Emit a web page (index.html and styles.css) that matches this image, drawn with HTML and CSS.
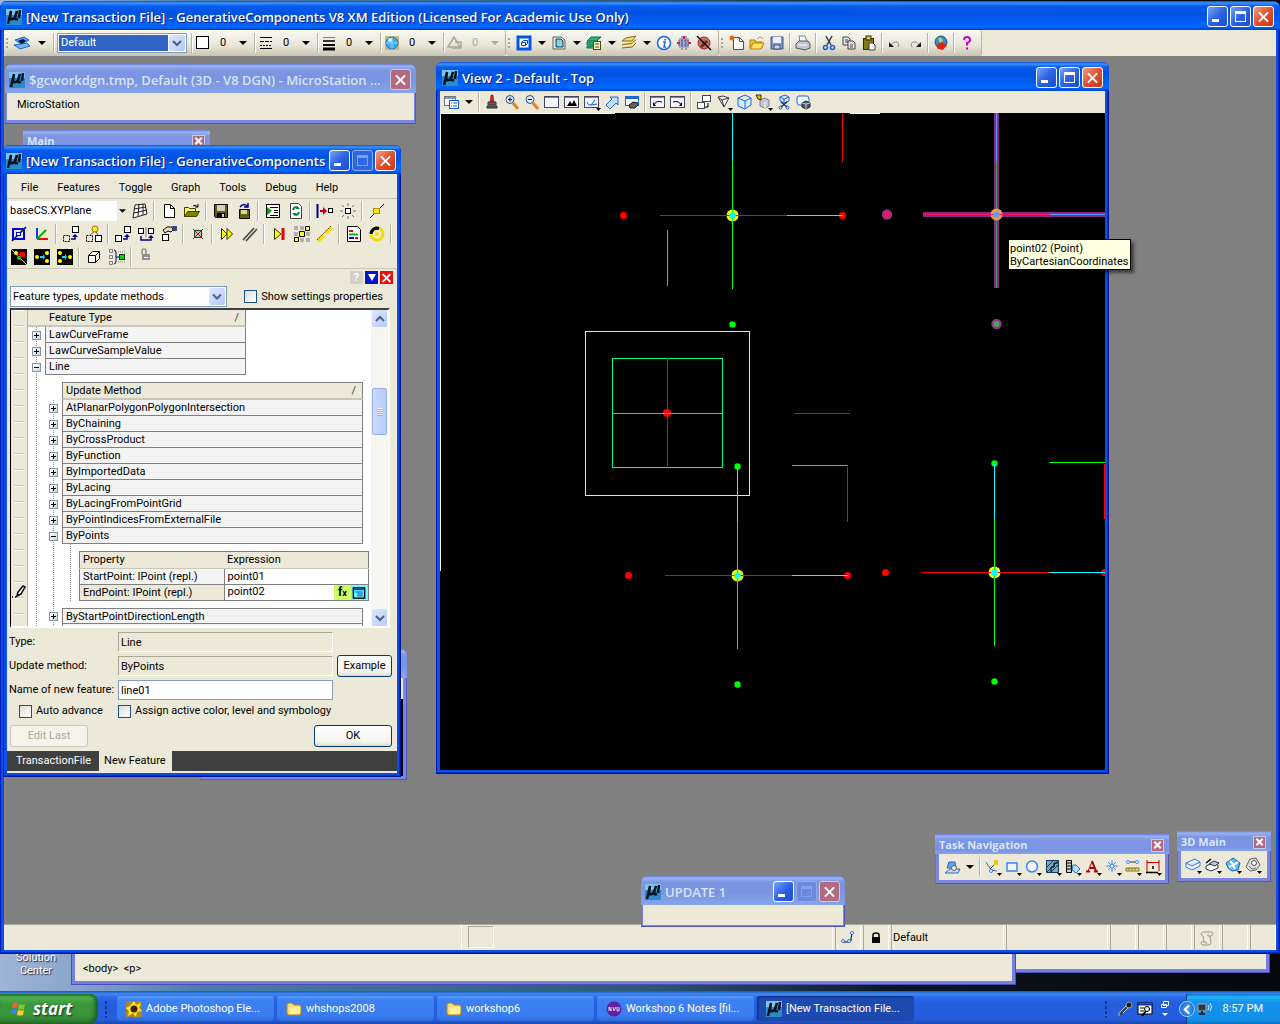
FILE: index.html
```html
<!DOCTYPE html>
<html lang="en">
<head>
  <meta charset="UTF-8">
  <meta name="viewport" content="width=device-width, initial-scale=1.0">
  <title>GenerativeComponents</title>
  <link rel="stylesheet" href="styles.css">
</head>
<body>

  <!-- icon sprite -->
  <svg class="sprite" xmlns="http://www.w3.org/2000/svg">
    <symbol id="mu" viewBox="0 0 16 16"><rect width="16" height="16" fill="#2c8cc8"/><rect width="16" height="6" fill="#7cc4ea"/><path d="M5 2 2 15M5 2 4 9q2 3 5-1l2-6-2 7q0 2 3 1M14 1l-1 8" fill="none" stroke="#001020" stroke-width="2.500"/></symbol>
    <symbol id="drop" viewBox="0 0 8 8"><path d="M0 2h8L4 6z" fill="#000"/></symbol>
    <symbol id="drop-off" viewBox="0 0 8 8"><path d="M0 2h8L4 6z" fill="#aaa899"/></symbol>
    <symbol id="chev" viewBox="0 0 10 8"><path d="M1 2l4 4 4-4" fill="none" stroke="#4d6185" stroke-width="2"/></symbol>
    <symbol id="chev-up" viewBox="0 0 10 8"><path d="M1 6l4-4 4 4" fill="none" stroke="#4d6185" stroke-width="2"/></symbol>

    <symbol id="layers-blue" viewBox="0 0 16 16"><path d="M0 10l6 4 10-3-3-3z" fill="#7ab6f5" stroke="#1c62c8"/><path d="M1 5l9-3 5 3-8 4z" fill="#58a0f0" stroke="#1c62c8"/><path d="M4 6l5-2 3 2-4 3z" fill="#001830"/></symbol>
    <symbol id="swatch" viewBox="0 0 16 16"><rect x="1.500" y="1.500" width="12" height="12" fill="#fff" stroke="#000"/></symbol>
    <symbol id="linestyle" viewBox="0 0 16 16"><path d="M2 2.500h12M2 13.500h12" stroke="#000"/><path d="M2 6.500h12" stroke="#000" stroke-dasharray="4 1"/><path d="M2 10.500h12" stroke="#000" stroke-dasharray="2 1"/></symbol>
    <symbol id="weight" viewBox="0 0 16 16"><path d="M2 2.500h12" stroke="#a08040"/><path d="M2 6h12" stroke="#333" stroke-width="2"/><path d="M2 10h12" stroke="#000" stroke-width="2"/><path d="M2 14h12" stroke="#000" stroke-width="3"/></symbol>
    <symbol id="ball" viewBox="0 0 16 16"><rect x="1" y="1" width="14" height="14" fill="#c8b878"/><circle cx="8" cy="8" r="6" fill="#38b0f0" stroke="#1868c0"/><path d="M8 2v12M2 8h12" stroke="#90d8ff"/><circle cx="6" cy="5" r="2" fill="#d8f6ff"/></symbol>
    <symbol id="shapes-off" viewBox="0 0 16 16"><path d="M7 2L1 12h12z" fill="none" stroke="#aaa899" stroke-width="1.500"/><path d="M8 7h6v6H5" fill="none" stroke="#aaa899" stroke-width="1.500"/></symbol>

    <symbol id="ref" viewBox="0 0 16 16"><rect x="2" y="2" width="12" height="12" fill="#fff" stroke="#0058e8" stroke-width="3"/><path d="M5.500 7.500h4v3h-4zM5.500 7.500l2-2h4v3l-2 2" fill="none" stroke="#0040b0"/></symbol>
    <symbol id="model" viewBox="0 0 16 16"><path d="M2 2h8l4 3v9H2z" fill="#e8eef0" stroke="#606060"/><path d="M5 4h5l2 2v6H5z" fill="#70d8e8" stroke="#303030"/></symbol>
    <symbol id="levels" viewBox="0 0 16 16"><path d="M1 6l4-4h10l-4 4zM1 7v3h10V7zM1 11v2h9v-2z" fill="#28b080" stroke="#107048"/><rect x="7.500" y="6.500" width="7" height="8" fill="#f8f0b8" stroke="#504820"/><path d="M9 9h4M9 12h4" stroke="#504820"/></symbol>
    <symbol id="levels-y" viewBox="0 0 16 16"><path d="M1 6l4-3 10-2-4 5zM1 9.500l10-1 4-4M1 13l10-1 4-4" fill="#f6e070" stroke="#806818"/></symbol>
    <symbol id="info" viewBox="0 0 16 16"><circle cx="8" cy="8" r="6.500" fill="#fff" stroke="#1868e0" stroke-width="1.500"/><path d="M9 4v1.500M7 7h2l-1 5h2" stroke="#1868e0" stroke-width="1.500" fill="none"/></symbol>
    <symbol id="snap" viewBox="0 0 16 16"><rect x="3" y="3" width="10" height="10" fill="#a8a8d8"/><path d="M6 1v14M10 1v14M2 6h12M2 10h12" stroke="#505080" stroke-dasharray="2 1"/><path d="M1 8h3M12 8h3M8 1v3" stroke="#e02020" stroke-width="2"/></symbol>
    <symbol id="nohammer" viewBox="0 0 16 16"><circle cx="8" cy="8" r="6" fill="#c87060" stroke="#a02020"/><path d="M4 11l6-6 2 2-6 6z" fill="#603020"/><path d="M1 1l14 14" stroke="#000" stroke-width="1.500"/></symbol>
    <symbol id="new" viewBox="0 0 16 16"><path d="M4.500 2.500h6l4 4v8h-10z" fill="#fff" stroke="#505050"/><path d="M10.500 2.500v4h4" fill="none" stroke="#505050"/><circle cx="3" cy="3" r="2.500" fill="#f06020"/></symbol>
    <symbol id="open" viewBox="0 0 16 16"><path d="M1 5h5l1 2h6v6H1z" fill="#f0c030" stroke="#b88010"/><path d="M1 14l3-6h11l-3 6z" fill="#ffe060" stroke="#b88010"/><path d="M8 4q3-4 6 0" stroke="#d89020" fill="none"/></symbol>
    <symbol id="save" viewBox="0 0 16 16"><path d="M2 2h12v12H2z" fill="#8098c8" stroke="#405080"/><rect x="4" y="2" width="8" height="6" fill="#f0f4ff"/><rect x="5" y="10" width="6" height="4" fill="#d0d8e8" stroke="#405080"/></symbol>
    <symbol id="print" viewBox="0 0 16 16"><path d="M5 7L4 1h6l2 6" fill="#fff" stroke="#7080a0"/><path d="M1 9l3-3h9l2 3v4l-5 2-9-2z" fill="#c0c4cc" stroke="#505868"/><path d="M3 10h9" stroke="#fff"/></symbol>
    <symbol id="cut" viewBox="0 0 16 16"><path d="M5 1l5 9M11 1L6 10" stroke="#303848" stroke-width="1.500"/><circle cx="4.500" cy="12.500" r="2" fill="none" stroke="#1858d8" stroke-width="1.500"/><circle cx="11.500" cy="12.500" r="2" fill="none" stroke="#1858d8" stroke-width="1.500"/></symbol>
    <symbol id="copy" viewBox="0 0 16 16"><path d="M2 2h5l2 2v6H2z" fill="#e8e8f0" stroke="#404040"/><path d="M7 6h5l2 2v6H7z" fill="#e8e8f0" stroke="#404040"/><path d="M4 5h3M4 7h3M9 10h3M9 12h3" stroke="#404040"/></symbol>
    <symbol id="paste" viewBox="0 0 16 16"><rect x="2.500" y="3.500" width="10" height="11" fill="#807818" stroke="#302c00"/><rect x="5" y="1" width="5" height="4" fill="#d0c060" stroke="#302c00"/><path d="M8 8h4l2 2v5H8z" fill="#fff" stroke="#404040"/></symbol>
    <symbol id="undo" viewBox="0 0 16 16"><path d="M4 10q2-4 6-3 3 1 1 5" fill="none" stroke="#909090"/><path d="M2 7v5h5z" fill="#202020"/></symbol>
    <symbol id="redo" viewBox="0 0 16 16"><path d="M12 10q-2-4-6-3-3 1-1 5" fill="none" stroke="#909090"/><path d="M14 7v5H9z" fill="#202020"/></symbol>
    <symbol id="earth" viewBox="0 0 16 16"><circle cx="8" cy="7" r="6" fill="#3090d0" stroke="#305080"/><path d="M5 3q4-1 5 3l-3 2z" fill="#a8d878"/><path d="M3 10l6-3 5 3-4 5-5-1z" fill="#e02010"/></symbol>
    <symbol id="help" viewBox="0 0 16 16"><path d="M5 5q0-3 3-3t3 3q0 2-3 3v2.500M8 12.500v2" fill="none" stroke="#d000c8" stroke-width="2"/></symbol>

    <symbol id="v-attr" viewBox="0 0 16 16"><rect x="1.500" y="2.500" width="11" height="9" fill="#fff" stroke="#707070"/><path d="M2 4h11" stroke="#7898c8" stroke-width="2"/><rect x="6.500" y="6.500" width="9" height="8" fill="#fff" stroke="#1858d8"/><path d="M8 9h1M8 12h1M10 9h4M10 12h4" stroke="#1858d8"/></symbol>
    <symbol id="brush" viewBox="0 0 16 16"><path d="M7 1h2l1 7H6z" fill="#c03028" stroke="#601010" stroke-width=".5"/><path d="M4 8h8v3H4z" fill="#a04040" stroke="#303840"/><path d="M3 12h10v2H3z" fill="#607080" stroke="#202830"/></symbol>
    <symbol id="zoomin" viewBox="0 0 16 16"><path d="M9 9l5 6" stroke="#e08820" stroke-width="3"/><circle cx="6" cy="5.500" r="4" fill="#d8ecff" stroke="#305080"/><path d="M4 5.500h4M6 3.500v4" stroke="#000"/></symbol>
    <symbol id="zoomout" viewBox="0 0 16 16"><path d="M9 9l5 6" stroke="#e08820" stroke-width="3"/><circle cx="6" cy="5.500" r="4" fill="#d8ecff" stroke="#305080"/><path d="M4 5.500h4" stroke="#000"/></symbol>
    <symbol id="win" viewBox="0 0 16 16"><rect x=".5" y="2.500" width="14" height="11" fill="#f4f4fc" stroke="#404860"/><path d="M1 3.500h13" stroke="#6888b8"/></symbol>
    <symbol id="win-fit" viewBox="0 0 16 16"><rect x=".5" y="2.500" width="14" height="11" fill="#f4f4fc" stroke="#404860"/><path d="M1 3.500h13" stroke="#6888b8"/><path d="M3 12l3-5 2 3 2-4 3 6z" fill="#000"/></symbol>
    <symbol id="win-rot" viewBox="0 0 16 16"><rect x=".5" y="2.500" width="14" height="11" fill="#f4f4fc" stroke="#404860"/><path d="M1 3.500h13" stroke="#6888b8"/><path d="M3 8q1 4 4 3l6-1M7 11l4-5" stroke="#1858d8" fill="none"/><path d="M12 14h5l-2.500 3z"/></symbol>
    <symbol id="pan" viewBox="0 0 16 16"><path d="M2 12l6-6-2-2h8v8l-2-2-6 6z" transform="translate(0 -1)" fill="#c8dcff" stroke="#1868d8"/></symbol>
    <symbol id="win-nav" viewBox="0 0 16 16"><rect x="1.500" y="2.500" width="13" height="9" fill="#f4f4fc" stroke="#1868d8"/><path d="M2 4h12" stroke="#1868d8" stroke-width="2"/><path d="M5 11l4-3 5 1v2l-3 3H6z" fill="#606060" stroke="#202020"/></symbol>
    <symbol id="win-prev" viewBox="0 0 16 16"><rect x=".5" y="2.500" width="14" height="11" fill="#f4f4fc" stroke="#404860"/><path d="M1 3.500h13" stroke="#6888b8"/><path d="M4 11q2-5 8-3" stroke="#000" fill="none"/><path d="M3 8v4h3z"/></symbol>
    <symbol id="win-next" viewBox="0 0 16 16"><rect x=".5" y="2.500" width="14" height="11" fill="#f4f4fc" stroke="#404860"/><path d="M1 3.500h13" stroke="#6888b8"/><path d="M11 11q-2-5-8-3" stroke="#000" fill="none"/><path d="M12 8v4H9z"/></symbol>
    <symbol id="v-copy" viewBox="0 0 16 16"><rect x="6.500" y="1.500" width="8" height="6" fill="#fff" stroke="#404860"/><rect x="1.500" y="8.500" width="7" height="6" fill="#fff" stroke="#404860"/><path d="M9 13h3v-4" stroke="#000" fill="none"/></symbol>
    <symbol id="cone" viewBox="0 0 16 16"><path d="M2 3l5-1 6 2-5 9zM2 3l4 3 7-2M6 6l2 7" fill="#f4f4fc" stroke="#404040"/><path d="M12 14h5l-2.500 3z"/></symbol>
    <symbol id="cube" viewBox="0 0 16 16"><path d="M2 4l7-3 6 3v7l-6 4-7-3zM2 4l7 3 6-3M9 7v8" fill="#d8e8ff" stroke="#1868e0"/></symbol>
    <symbol id="clip-y" viewBox="0 0 16 16"><path d="M4 6l5-2 4 2v6l-4 2-5-2z" fill="#c8c8d0" stroke="#808090"/><path d="M9 8v6" stroke="#fff"/><path d="M0 1h5v5l-3-1z" fill="#d8c800" stroke="#303000"/><path d="M12 14h5l-2.500 3z"/></symbol>
    <symbol id="clip-b" viewBox="0 0 16 16"><path d="M4 3l5-2 4 2v4L8 9 4 7zM4 3l4 2 5-2M8 5v4" fill="#d8e8ff" stroke="#1868e0"/><path d="M5 8l6 5M11 8l-6 5" stroke="#303848" stroke-width="1.500"/><circle cx="4.500" cy="13.500" r="1.500" fill="none" stroke="#1858d8"/><circle cx="11.500" cy="13.500" r="1.500" fill="none" stroke="#1858d8"/></symbol>
    <symbol id="clip-m" viewBox="0 0 16 16"><path d="M3 2h8q2 0 2 3v5H7v1H3q-2 0-2-3V4q0-2 2-2z" fill="#f4f8ff" stroke="#1868e0"/><path d="M6 9l4-2 4 2v4l-4 2-4-2z" fill="#505860" stroke="#202020"/><path d="M6 9l4 1 4-1M10 10v5" fill="none" stroke="#c0c8d0"/></symbol>

    <symbol id="mesh" viewBox="0 0 16 16"><path d="M3 2l10-1 2 10-14 4zM7 1L6 13M11 1l0 11M2 6l12-2M2 10l13-3" fill="#fff" stroke="#202020"/></symbol>
    <symbol id="page" viewBox="0 0 16 16"><path d="M3.500 1.500h6l4 4v9h-10z" fill="#fff" stroke="#000"/><path d="M9.500 1.500v4h4" fill="none" stroke="#000"/></symbol>
    <symbol id="folder" viewBox="0 0 16 16"><path d="M.5 13.500v-9h4l1 1h6v3" fill="#ffff60" stroke="#404000"/><path d="M.5 13.500l3-5h12l-3 5z" fill="#808000" stroke="#404000"/><path d="M9 3q2-2 5 1M14 1v3h-3" fill="none" stroke="#000"/></symbol>
    <symbol id="disk" viewBox="0 0 16 16"><path d="M1.500 1.500h13v13h-12l-1-1z" fill="#606000" stroke="#000"/><rect x="4" y="2" width="8" height="6" fill="#d4d0c8"/><rect x="4" y="10" width="8" height="4" fill="#000"/><rect x="9" y="11" width="2" height="3" fill="#d4d0c8"/></symbol>
    <symbol id="disk-up" viewBox="0 0 16 16"><path d="M3.500 6.500h10v9h-10z" fill="#606000" stroke="#000"/><rect x="5" y="7" width="6" height="4" fill="#d4d0c8"/><path d="M4 4q4-5 8 0M12 0v4H8" fill="none" stroke="#000090" stroke-width="1.500"/></symbol>
    <symbol id="play-list" viewBox="0 0 16 16"><rect x="1.500" y="1.500" width="13" height="13" fill="#fff" stroke="#000"/><path d="M2 4l5 4-5 4z" fill="#00a000"/><path d="M5 4.500h8M9 7.500h4M9 9.500h4M5 12.500h8" stroke="#000"/></symbol>
    <symbol id="refresh" viewBox="0 0 16 16"><path d="M2.500.5h8l3 3v12h-11z" fill="#fff" stroke="#404040"/><path d="M5 7q1-4 5-2M11 9q-1 4-5 2" fill="none" stroke="#008040" stroke-width="2"/><path d="M9 3l3 3H8zM7 13l-3-3h4z" fill="#008040"/></symbol>
    <symbol id="step" viewBox="0 0 16 16"><path d="M.5 1v14" stroke="#000080" stroke-width="2"/><path d="M3 8h5" stroke="#c00000" stroke-width="2"/><path d="M6 4l4 4-4 4z" fill="#c00000"/><rect x="11.500" y="5.500" width="4" height="4" fill="#fff" stroke="#000"/></symbol>
    <symbol id="glow" viewBox="0 0 16 16"><rect x="5.500" y="5.500" width="5" height="5" fill="#fff" stroke="#000"/><path d="M8 0v3M8 13v3M0 8h3M13 8h3M2 2l2 2M14 2l-2 2M2 14l2-2M14 14l-2-2" stroke="#707070"/></symbol>
    <symbol id="pt-line" viewBox="0 0 16 16"><path d="M1 15L15 1" stroke="#000"/><rect x="4.500" y="5.500" width="6" height="5" fill="#ffe000" stroke="#b09000"/></symbol>
    <symbol id="plane" viewBox="0 0 16 16"><path d="M1 15L15 1" stroke="#000" stroke-width="1.500"/><rect x="2" y="3" width="11" height="10" fill="none" stroke="#0000e0" stroke-width="2"/><rect x="5.500" y="6.500" width="4" height="3" fill="#fff" stroke="#0000e0"/></symbol>
    <symbol id="axes" viewBox="0 0 16 16"><path d="M3 2v11" stroke="#0040ff" stroke-width="2"/><path d="M3 13h11" stroke="#ff0000" stroke-width="2"/><path d="M3 13l9-9" stroke="#00b000" stroke-width="2"/></symbol>
    <symbol id="move-a" viewBox="0 0 16 16"><rect x="9.500" y=".5" width="6" height="6" fill="#fff" stroke="#000"/><rect x=".5" y="9.500" width="6" height="6" fill="none" stroke="#000" stroke-dasharray="2 1"/><path d="M8 13h4v-3" fill="none" stroke="#000080" stroke-width="1.500"/><path d="M9 11l3-3 3 3z" fill="#000080"/></symbol>
    <symbol id="move-b" viewBox="0 0 16 16"><circle cx="9" cy="3" r="3" fill="#ffe820" stroke="#908000"/><rect x=".5" y="9.500" width="6" height="6" fill="none" stroke="#000" stroke-dasharray="2 1"/><rect x="9.500" y="9.500" width="6" height="6" fill="#fff" stroke="#000"/><path d="M8 6l-4 3M10 6l2 3" stroke="#606060"/></symbol>
    <symbol id="move-c" viewBox="0 0 16 16"><rect x="9.500" y=".5" width="6" height="6" fill="#fff" stroke="#000"/><rect x=".5" y="9.500" width="6" height="6" fill="#fff" stroke="#000"/><path d="M8 13h4v-3" fill="none" stroke="#000080" stroke-width="1.500"/><path d="M9 11l3-3 3 3z" fill="#000080"/></symbol>
    <symbol id="move-d" viewBox="0 0 16 16"><rect x=".5" y="2.500" width="5" height="5" fill="#fff" stroke="#000"/><rect x="10.500" y="2.500" width="5" height="5" fill="#fff" stroke="#000"/><path d="M8 1v10" stroke="#808080"/><path d="M3 10v4h10v-3" fill="none" stroke="#000080" stroke-width="1.500"/><path d="M10 12l3-3 3 3z" fill="#000080"/></symbol>
    <symbol id="hand" viewBox="0 0 16 16"><rect x="1.500" y="8.500" width="6" height="6" fill="#fff" stroke="#000"/><path d="M2 4l4-3h5l1 3-2 2-3-1-3 2z" fill="#e8e0c0" stroke="#000"/><path d="M11 0h5v5h-4z" fill="#304880"/></symbol>
    <symbol id="cross" viewBox="0 0 16 16"><rect x="4.500" y="4.500" width="7" height="7" fill="#a8c8b0" stroke="#304030"/><path d="M3 3l10 10M13 3L3 13" stroke="#005048"/><path d="M5 5l6 6M11 5l-6 6" stroke="#e00000"/></symbol>
    <symbol id="ffwd" viewBox="0 0 16 16"><path d="M2.500 2.500L8 8l-5.500 5.500zM8 2.500L13.500 8 8 13.500z" fill="#ffff00" stroke="#303000"/></symbol>
    <symbol id="lines" viewBox="0 0 16 16"><path d="M1 14L12 2M4 15L15 3" stroke="#404040" stroke-width="1.500"/><path d="M2 15L14 2" stroke="#c0c0c0"/></symbol>
    <symbol id="to-end" viewBox="0 0 16 16"><path d="M3.500 2.500L10 8l-6.500 5.500z" fill="#ffff00" stroke="#303000"/><path d="M12 2v12" stroke="#f00000" stroke-width="3"/></symbol>
    <symbol id="cells" viewBox="0 0 16 16"><path d="M0 0h4v4H0zM6 0h4v4H6zM0 6h4v4H0zM12 6h4v4h-4zM6 12h4v4H6zM12 12h4v4h-4z" fill="#b0b0b0"/><path d="M11.500.5h4v4h-4zM5.500 5.500h5v5h-5zM.5 11.500h4v4h-4z" fill="#ffff20" stroke="#000"/></symbol>
    <symbol id="pts" viewBox="0 0 16 16"><path d="M1 15L15 1" stroke="#ffe000" stroke-width="4" stroke-dasharray="8 3"/><path d="M0 14L14 0" stroke="#504800" stroke-dasharray="2 1"/></symbol>
    <symbol id="script" viewBox="0 0 16 16"><path d="M1.500.5h10l3 3v12h-13z" fill="#fff" stroke="#000"/><path d="M3 5h4M9 12h3" stroke="#f00000" stroke-width="2"/><path d="M3 8.500h9" stroke="#00c000" stroke-width="2"/><path d="M3 12h5" stroke="#0000f0" stroke-width="2"/></symbol>
    <symbol id="ring" viewBox="0 0 16 16"><circle cx="8" cy="8" r="6" fill="none" stroke="#f0e000" stroke-width="3"/><path d="M2 8a6 6 0 0 1 8-5.500" fill="none" stroke="#000" stroke-width="3"/><circle cx="8" cy="8" r="2" fill="#f0e000"/></symbol>
    <symbol id="g1" viewBox="0 0 16 16"><rect width="16" height="16"/><path d="M0 0l16 16" stroke="#d0d0d0"/><path d="M5 5l6 1M5 5l5 7" stroke="#f00000"/><circle cx="5" cy="4" r="2" fill="#ffff00"/><path d="M9 3h5v5H9z" fill="#f00000"/><circle cx="8" cy="9" r="2" fill="#00e000"/></symbol>
    <symbol id="g2" viewBox="0 0 16 16"><rect width="16" height="16"/><circle cx="3" cy="8" r="2" fill="#ffff00"/><circle cx="13" cy="4" r="2" fill="#ffff00"/><circle cx="13" cy="12" r="2" fill="#ffff00"/><path d="M6 7h3V5l2 3-2 3V9H6z" fill="#00e0ff"/></symbol>
    <symbol id="g3" viewBox="0 0 16 16"><rect width="16" height="16"/><circle cx="13" cy="8" r="2" fill="#ffff00"/><circle cx="3" cy="4" r="2" fill="#ffff00"/><circle cx="3" cy="12" r="2" fill="#ffff00"/><path d="M5 7h3V5l2 3-2 3V9H5z" fill="#00e0ff"/></symbol>
    <symbol id="box3" viewBox="0 0 16 16"><path d="M2.500 6.500h7v7h-7zM2.500 6.500l4-4h7l-4 4M13.500 2.500v7l-4 4" fill="#fff" stroke="#000"/></symbol>
    <symbol id="merge" viewBox="0 0 16 16"><path d="M.5.5h3v3h-3zM.5 6.500h3v3h-3zM.5 12.500h3v3h-3z" fill="none" stroke="#808080"/><path d="M5 1q2 0 2 3v8q0 3-2 3M7 8h3" fill="none" stroke="#000080"/><rect x="10.500" y="5.500" width="5" height="5" fill="#00e000" stroke="#004000"/><path d="M9 3h7M9 13h7" stroke="#808080" stroke-dasharray="1 1"/></symbol>
    <symbol id="unlock" viewBox="0 0 16 16"><path d="M4 5V2q0-2 2-2t2 2v3" fill="none" stroke="#909090" stroke-width="1.500"/><rect x="4" y="5" width="8" height="6" fill="#909090"/><path d="M6 8h4v1H6z" fill="#fff"/></symbol>

    <symbol id="task" viewBox="0 0 16 16"><path d="M1 14h13l2-4H6z" fill="#c8dcf8" stroke="#3068c0"/><path d="M3 9l2-6h6l1 6z" fill="#58a8f0" stroke="#3068c0"/><circle cx="10" cy="9" r="2.500" fill="#f4e8d0" stroke="#606060"/></symbol>
    <symbol id="t-line" viewBox="0 0 16 16"><path d="M1 3l5 8 6 1" stroke="#3878c0" fill="none"/><path d="M5 10l5-5" stroke="#303030"/><path d="M9 1h4v5h-4z" fill="#e8c820"/><circle cx="6" cy="12" r="1.500" fill="#fff" stroke="#3080f0"/><path d="M12 14h5l-2.500 3z"/></symbol>
    <symbol id="t-rect" viewBox="0 0 16 16"><rect x="2" y="4" width="10" height="8" fill="#f0f6ff" stroke="#3888f8" stroke-width="1.500"/><path d="M12 14h5l-2.500 3z"/></symbol>
    <symbol id="t-circ" viewBox="0 0 16 16"><circle cx="7" cy="7.500" r="5.500" fill="#f0f6ff" stroke="#3888f8" stroke-width="1.500"/><path d="M12 14h5l-2.500 3z"/></symbol>
    <symbol id="t-hatch" viewBox="0 0 16 16"><path d="M1.500 1.500h12v12h-12z" fill="#78a8c8" stroke="#103850"/><path d="M2 8l6-6M2 13l11-11M6 13l7-7" stroke="#103850"/><path d="M6 13V8h3V4h4" fill="none" stroke="#000"/><path d="M12 14h5l-2.500 3z"/></symbol>
    <symbol id="t-film" viewBox="0 0 16 16"><path d="M1.500 1.500h5v12h-5zM2 4h4M2 7h4M2 10h4" fill="#d0d0d0" stroke="#000"/><path d="M8 6h3l4 4-4 4-4-3z" fill="#b8e0ff" stroke="#2068c0"/><path d="M12 14h5l-2.500 3z"/></symbol>
    <symbol id="t-text" viewBox="0 0 16 16"><path d="M3 12L7 3" stroke="#b00000" fill="none"/><path d="M7 2l4 10M1 12.500h4M9 12.500h4M5 9h5" stroke="#b00000" stroke-width="2" fill="none"/><path d="M12 14h5l-2.500 3z"/></symbol>
    <symbol id="t-star" viewBox="0 0 16 16"><path d="M7 1v12M1 7h12M3 3l8 8M11 3l-8 8" stroke="#3888f8"/><circle cx="7" cy="7" r="2" fill="#fff" stroke="#3888f8"/><path d="M12 14h5l-2.500 3z"/></symbol>
    <symbol id="t-meas" viewBox="0 0 16 16"><path d="M4 3h7" stroke="#303030"/><circle cx="3" cy="3" r="1.500" fill="#fff" stroke="#3888f8"/><circle cx="12" cy="3" r="1.500" fill="#fff" stroke="#3888f8"/><path d="M1 9h13v3H1z" fill="#e8d880" stroke="#807020"/><path d="M4 9v2M7 9v2M10 9v2" stroke="#807020"/><path d="M12 14h5l-2.500 3z"/></symbol>
    <symbol id="t-dim" viewBox="0 0 16 16"><path d="M2 1v12M14 1v11M2 3.500h12" stroke="#d00000"/><path d="M1 13.500h12M8 10V7" stroke="#000" stroke-width="1.500" fill="none"/><path d="M12 14h5l-2.500 3z"/></symbol>
    <symbol id="m-slab" viewBox="0 0 16 16"><path d="M1 6l9-4 5 3v4l-8 4-6-3zM1 6l6 3 8-4" fill="#f0f6ff" stroke="#2878e8"/><path d="M12 14h5l-2.500 3z"/></symbol>
    <symbol id="m-ext" viewBox="0 0 16 16"><path d="M1 9l6-3 6 2v3l-7 3-5-2z" fill="#fff" stroke="#303840"/><path d="M4 7l5-3 5 2-4 3z" fill="#b0c8e8" stroke="#303840"/><path d="M1 6l5-4" stroke="#000" stroke-width="1.500"/><path d="M12 14h5l-2.500 3z"/></symbol>
    <symbol id="m-mod" viewBox="0 0 16 16"><path d="M1 6l7-5 7 5-2 7-6 1-4-3z" fill="#60b8f0" stroke="#1868b8"/><path d="M5 4l4 4 4-3M4 10l4-2 2 4" stroke="#fff" stroke-width="2" fill="none"/><path d="M12 14h5l-2.500 3z"/></symbol>
    <symbol id="m-srf" viewBox="0 0 16 16"><path d="M1 10l4-8 6-1 4 7-4 5-6 1z" fill="#e0e0e0" stroke="#606060"/><circle cx="9" cy="6" r="2.500" fill="#fff" stroke="#505050"/><path d="M4 9l3 3 4-1" stroke="#707070" fill="none"/><path d="M12 14h5l-2.500 3z"/></symbol>

    <symbol id="snap-s" viewBox="0 0 16 16"><path d="M3 12h6q3 0 2-4l1-4" stroke="#000" fill="none"/><circle cx="3" cy="11" r="1.500" fill="#fff" stroke="#3070e0"/><circle cx="9" cy="11" r="1.500" fill="#fff" stroke="#3070e0"/><circle cx="12" cy="3" r="1.500" fill="#fff" stroke="#3070e0"/></symbol>
    <symbol id="lock" viewBox="0 0 16 16"><path d="M5 8V5q0-2 3-2t3 2v3" fill="none" stroke="#000" stroke-width="1.500"/><rect x="4" y="7" width="8" height="6"/></symbol>
    <symbol id="scroll-s" viewBox="0 0 16 16"><path d="M4 2h8q2 0 2 2t-3 2l1 7q0 2-2 2H4q-2 0-2-2t3-1l-1-6q-2-1-2-2t2-2zM5 12q3 0 3 2M11 6H9V4" fill="none" stroke="#9c9a8c"/></symbol>
    <symbol id="pencil" viewBox="0 0 16 16"><path d="M6 12l1-4 5-6 2 1-4 7zM1 13h1M4 13h1" fill="#fff" stroke="#000" stroke-width="1.500"/></symbol>
    <symbol id="form" viewBox="0 0 16 16"><rect x="2" y="3" width="12" height="11" fill="#66ffff" stroke="#000" stroke-width="1.500"/><path d="M3 4.500h10" stroke="#0040c0" stroke-width="2"/><path d="M4 7.500h8M6 9.500h6M6 11.500h6" stroke="#0040c0"/></symbol>

    <symbol id="flag" viewBox="0 0 16 16"><path d="M2 2q3-1 5 0L6 7q-2-1-5 0z" fill="#f06030"/><path d="M8 3q3 1 6 0l-1 5q-3 1-6 0z" fill="#80c830"/><path d="M1 8q2-1 5 0l-1 5q-3-1-5 0z" fill="#4080f0"/><path d="M7 9q3 1 6 0l-1 5q-3 1-6 0z" fill="#f8d030"/></symbol>
    <symbol id="sun" viewBox="0 0 16 16"><rect width="16" height="16" fill="#a88820"/><path d="M8 0l2 4 5-2-2 5 3 3-5 1-1 5-3-4-5 3 1-5-3-3 4-2z" fill="#ffe820"/><circle cx="8" cy="8" r="3.500" fill="#402000"/></symbol>
    <symbol id="dir" viewBox="0 0 16 16"><path d="M1 4q0-2 2-2h3l2 2h5q2 0 2 2v6q0 2-2 2H3q-2 0-2-2z" fill="#f8d868" stroke="#b88818"/><path d="M3 6h11v7H4z" fill="#fff0a0"/></symbol>
    <symbol id="nvu" viewBox="0 0 16 16"><circle cx="8" cy="8" r="7.500" fill="#6020a0"/><path d="M3 10V6l2 4V6M7 6l1 4 2-4M11 6v4h2V6" fill="none" stroke="#e8d8ff"/></symbol>
    <symbol id="mic" viewBox="0 0 16 16"><path d="M2 15q-1-3 2-5l6-6 2 2-6 6" fill="#404040" stroke="#c8c8c8"/><circle cx="12" cy="4" r="3" fill="#202020" stroke="#a0a0a0"/></symbol>
    <symbol id="ime" viewBox="0 0 16 16"><rect x="1" y="2" width="14" height="11" fill="#fff" stroke="#000"/><path d="M1 3.500h14" stroke="#0030a0" stroke-width="2"/><path d="M3 7h4M3 10h4" stroke="#000"/><circle cx="10" cy="8" r="2.500" fill="#e8e8e8" stroke="#000"/><path d="M9 10l-4 5" stroke="#000" stroke-width="2"/></symbol>
    <symbol id="restore" viewBox="0 0 16 16"><path d="M6.500.5h5v4h-5zM4.500 3.500h5v3h-5z" fill="none" stroke="#fff"/><path d="M5 12h6l-3 3z" fill="#fff"/></symbol>
    <symbol id="net" viewBox="0 0 16 16"><rect x="1" y="3" width="8" height="7" fill="#303840" stroke="#a0a8b0"/><path d="M2 13h6M5 10v3" stroke="#202830" stroke-width="2"/><path d="M11 4q2 2 0 5M13 2q3 4 0 8" fill="none" stroke="#d0e8ff"/></symbol>

    <!-- coordinate system drawn around one point -->
    <symbol id="cs" viewBox="-120 -120 240 240">
      <g shape-rendering="crispEdges">
        <path d="M54-110h56" stroke="#00ff00"/>
        <path d="M110-109v55" stroke="#ff0000"/>
        <path d="M0-54V73" stroke="#00ff00"/>
        <path d="M0-109v55" stroke="#00ffff"/>
      </g>
      <circle cx="-109" r="3.500" fill="#ff0000"/>
      <circle cx="110" r="3.500" fill="#ff0000"/>
      <circle cy="109" r="3.200" fill="#00ff00"/>
      <circle cy="-109" r="3.200" fill="#00ff00"/>
      <path d="M0-109v30" stroke="#00ffff" shape-rendering="crispEdges"/>
      <circle r="6" fill="#ffff00"/>
      <g shape-rendering="crispEdges">
        <path d="M-73 0H54" stroke="#ff0000"/>
        <path d="M54 0h56" stroke="#00ffff"/>
        <path d="M0-7V7" stroke="#00ff00"/>
      </g>
      <circle r="3.200" fill="#00ffff"/>
    </symbol>
  </svg>

  <main class="desktop">
    <p class="desk-label">Solution<br>Center</p>

    <div class="back-win back-right"></div>
    <div class="back-win back-editor"><span>&lt;body&gt; &nbsp;&lt;p&gt;</span></div>

    <!-- application frame -->
    <section class="window app">
      <header class="title">
        <svg class="ico"><use href="#mu"/></svg>
        <h1>[New Transaction File] - GenerativeComponents V8 XM Edition (Licensed For Academic Use Only)</h1>
        <button class="cap min" aria-label="Minimize"></button>
        <button class="cap max" aria-label="Maximize"></button>
        <button class="cap close" aria-label="Close"></button>
      </header>
      <div class="bands">
        <div class="band">
          <button class="tb"><svg class="ico"><use href="#layers-blue"/></svg></button>
          <button class="tb"><svg class="arr"><use href="#drop"/></svg></button>
          <i class="sep thin"></i>
          <span class="combo level">
            <select aria-label="Level"><option>Default</option></select>
            <svg class="chev"><use href="#chev"/></svg>
          </span>
          <i class="sep thin"></i>
          <button class="tb"><svg class="ico"><use href="#swatch"/></svg></button><span class="num">0</span><button class="tb"><svg class="arr"><use href="#drop"/></svg></button>
          <i class="sep thin"></i>
          <button class="tb"><svg class="ico"><use href="#linestyle"/></svg></button><span class="num">0</span><button class="tb"><svg class="arr"><use href="#drop"/></svg></button>
          <i class="sep thin"></i>
          <button class="tb"><svg class="ico"><use href="#weight"/></svg></button><span class="num">0</span><button class="tb"><svg class="arr"><use href="#drop"/></svg></button>
          <i class="sep thin"></i>
          <button class="tb"><svg class="ico"><use href="#ball"/></svg></button><span class="num">0</span><button class="tb"><svg class="arr"><use href="#drop"/></svg></button>
          <i class="sep thin"></i>
          <button class="tb"><svg class="ico"><use href="#shapes-off"/></svg></button><span class="num off">0</span><button class="tb"><svg class="arr"><use href="#drop-off"/></svg></button>
        </div>
        <div class="band">
          <button class="tb"><svg class="ico"><use href="#ref"/></svg></button><button class="tb narrow"><svg class="arr"><use href="#drop"/></svg></button>
          <button class="tb"><svg class="ico"><use href="#model"/></svg></button><button class="tb narrow"><svg class="arr"><use href="#drop"/></svg></button>
          <button class="tb"><svg class="ico"><use href="#levels"/></svg></button><button class="tb narrow"><svg class="arr"><use href="#drop"/></svg></button>
          <button class="tb"><svg class="ico"><use href="#levels-y"/></svg></button><button class="tb narrow"><svg class="arr"><use href="#drop"/></svg></button>
          <button class="tb"><svg class="ico"><use href="#info"/></svg></button>
          <button class="tb"><svg class="ico"><use href="#snap"/></svg></button>
          <button class="tb"><svg class="ico"><use href="#nohammer"/></svg></button>
        </div>
        <div class="band">
          <button class="tb"><svg class="ico"><use href="#new"/></svg></button>
          <button class="tb"><svg class="ico"><use href="#open"/></svg></button>
          <button class="tb"><svg class="ico"><use href="#save"/></svg></button>
          <i class="sep"></i>
          <button class="tb"><svg class="ico"><use href="#print"/></svg></button>
          <i class="sep"></i>
          <button class="tb"><svg class="ico"><use href="#cut"/></svg></button>
          <button class="tb"><svg class="ico"><use href="#copy"/></svg></button>
          <button class="tb"><svg class="ico"><use href="#paste"/></svg></button>
          <i class="sep"></i>
          <button class="tb"><svg class="ico"><use href="#undo"/></svg></button>
          <button class="tb"><svg class="ico"><use href="#redo"/></svg></button>
          <i class="sep"></i>
          <button class="tb"><svg class="ico"><use href="#earth"/></svg></button>
          <i class="sep"></i>
          <button class="tb"><svg class="ico"><use href="#help"/></svg></button>
        </div>
      </div>
      <div class="mdi"></div>
      <footer class="status">
        <span class="cell prompt"></span>
        <span class="cell box"></span>
        <span class="cell message"></span>
        <span class="cell"><svg class="ico"><use href="#snap-s"/></svg></span>
        <span class="cell"><svg class="ico"><use href="#lock"/></svg></span>
        <span class="cell level-name">Default</span>
        <span class="cell wide"></span>
        <span class="cell"></span>
        <span class="cell"></span>
        <span class="cell"></span>
        <span class="cell"><svg class="ico"><use href="#scroll-s"/></svg></span>
        <span class="cell"></span>
        <span class="cell"></span>
      </footer>
    </section>

    <section class="window idle ustn">
      <header class="title">
        <svg class="ico"><use href="#mu"/></svg>
        <h2>$gcworkdgn.tmp, Default (3D - V8 DGN) - MicroStation ...</h2>
        <button class="cap close" aria-label="Close"></button>
      </header>
      <nav class="menu"><a href="#">MicroStation</a></nav>
    </section>

    <section class="window idle tool main-tools">
      <header class="title"><h2>Main</h2><button class="cap close" aria-label="Close"></button></header>
      <div class="tools"></div>
    </section>

    <section class="window idle behind">
      <header class="title"></header>
      <div class="behind-bar"></div>
      <div class="behind-view"></div>
    </section>

    <!-- view window -->
    <section class="window view">
      <header class="title">
        <svg class="ico"><use href="#mu"/></svg>
        <h2>View 2 - Default - Top</h2>
        <button class="cap min" aria-label="Minimize"></button>
        <button class="cap max" aria-label="Maximize"></button>
        <button class="cap close" aria-label="Close"></button>
      </header>
      <div class="viewbar">
        <button class="tb"><svg class="ico"><use href="#v-attr"/></svg></button><button class="tb narrow"><svg class="arr"><use href="#drop"/></svg></button>
        <i class="sep"></i>
        <button class="tb"><svg class="ico"><use href="#brush"/></svg></button>
        <button class="tb"><svg class="ico"><use href="#zoomin"/></svg></button>
        <button class="tb"><svg class="ico"><use href="#zoomout"/></svg></button>
        <button class="tb"><svg class="ico"><use href="#win"/></svg></button>
        <button class="tb"><svg class="ico"><use href="#win-fit"/></svg></button>
        <button class="tb"><svg class="ico"><use href="#win-rot"/></svg></button>
        <button class="tb"><svg class="ico"><use href="#pan"/></svg></button>
        <button class="tb"><svg class="ico"><use href="#win-nav"/></svg></button>
        <i class="sep"></i>
        <button class="tb"><svg class="ico"><use href="#win-prev"/></svg></button>
        <button class="tb"><svg class="ico"><use href="#win-next"/></svg></button>
        <i class="sep"></i>
        <button class="tb"><svg class="ico"><use href="#v-copy"/></svg></button>
        <button class="tb"><svg class="ico"><use href="#cone"/></svg></button>
        <button class="tb"><svg class="ico"><use href="#cube"/></svg></button>
        <button class="tb"><svg class="ico"><use href="#clip-y"/></svg></button>
        <button class="tb"><svg class="ico"><use href="#clip-b"/></svg></button>
        <button class="tb"><svg class="ico"><use href="#clip-m"/></svg></button>
      </div>
      <svg class="canvas">
        <g stroke="#fff" shape-rendering="crispEdges"><path d="M.5 0v458M0 .5h175M410 .5h30"/></g>
        <!-- base coordinate system -->
        <g fill="none" shape-rendering="crispEdges">
          <rect x="145.500" y="218.500" width="164" height="164" stroke="#ffff00"/>
          <rect x="172.500" y="245.500" width="110" height="109" stroke="#00ff99"/>
          <path d="M227.500 117v56" stroke="#00ff00"/>
          <path d="M354 300.500h56" stroke="#ff0000"/>
        </g>
        <circle cx="227" cy="300" r="4" fill="#ff0000"/>
        <path d="M227.500 245v110" stroke="#ff0000" shape-rendering="crispEdges"/>
        <path d="M173 300.500h109" stroke="#00ff00" shape-rendering="crispEdges"/>
        <use href="#cs" x="172.500" y="-17.500" width="240" height="240"/>
        <use href="#cs" x="177.500" y="342.500" width="240" height="240"/>
        <use href="#cs" x="434.500" y="339.500" width="240" height="240"/>
        <!-- highlighted point -->
        <g shape-rendering="crispEdges">
          <path d="M556.500 0v175M483 101.500h182" stroke="#862a86" stroke-width="5"/>
          <path d="M556.500 48v127" stroke="#4a9450"/>
          <path d="M556.500 0v48" stroke="#5a9cff"/>
        </g>
        <circle cx="556.500" cy="101.500" r="6" fill="#f0a030"/>
        <path d="M483 101.500h127" stroke="#ff1060" shape-rendering="crispEdges"/>
        <path d="M610 101.500h55" stroke="#5a9cff" shape-rendering="crispEdges"/>
        <circle cx="556.500" cy="101.500" r="3" fill="#5a9cff"/>
        <circle cx="447" cy="101.500" r="5.200" fill="#86398a"/>
        <circle cx="447" cy="101.500" r="3" fill="#ff1060"/>
        <circle cx="556.500" cy="211" r="5.200" fill="#86398a"/>
        <circle cx="556.500" cy="211" r="3" fill="#50a050"/>
      </svg>
    </section>

    <div class="tooltip">point02 (Point)<br>ByCartesianCoordinates</div>

    <!-- feature window -->
    <section class="window gc">
      <header class="title">
        <svg class="ico"><use href="#mu"/></svg>
        <h2>[New Transaction File] - GenerativeComponents</h2>
        <button class="cap min" aria-label="Minimize"></button>
        <button class="cap max off" aria-label="Maximize"></button>
        <button class="cap close" aria-label="Close"></button>
      </header>
      <div class="gc-body">
        <nav class="menu gc-menu">
          <a href="#">File</a><a href="#">Features</a><a href="#">Toggle</a><a href="#">Graph</a><a href="#">Tools</a><a href="#">Debug</a><a href="#">Help</a>
        </nav>
        <div class="gc-tools">
          <div class="gc-row">
            <span class="combo cs-combo">
              <select aria-label="Coordinate system"><option>baseCS.XYPlane</option></select>
              <svg class="arr"><use href="#drop"/></svg>
            </span>
            <button class="tb"><svg class="ico"><use href="#mesh"/></svg></button>
            <i class="sep"></i>
            <button class="tb"><svg class="ico"><use href="#page"/></svg></button>
            <button class="tb"><svg class="ico"><use href="#folder"/></svg></button>
            <i class="sep"></i>
            <button class="tb"><svg class="ico"><use href="#disk"/></svg></button>
            <button class="tb"><svg class="ico"><use href="#disk-up"/></svg></button>
            <i class="sep"></i>
            <button class="tb"><svg class="ico"><use href="#play-list"/></svg></button>
            <button class="tb"><svg class="ico"><use href="#refresh"/></svg></button>
            <i class="sep"></i>
            <button class="tb"><svg class="ico"><use href="#step"/></svg></button>
            <button class="tb"><svg class="ico"><use href="#glow"/></svg></button>
            <i class="sep"></i>
            <button class="tb"><svg class="ico"><use href="#pt-line"/></svg></button>
          </div>
          <div class="gc-row">
            <button class="tb"><svg class="ico"><use href="#plane"/></svg></button>
            <button class="tb"><svg class="ico"><use href="#axes"/></svg></button>
            <i class="sep"></i>
            <button class="tb"><svg class="ico"><use href="#move-a"/></svg></button>
            <button class="tb"><svg class="ico"><use href="#move-b"/></svg></button>
            <i class="sep"></i>
            <button class="tb"><svg class="ico"><use href="#move-c"/></svg></button>
            <button class="tb"><svg class="ico"><use href="#move-d"/></svg></button>
            <button class="tb"><svg class="ico"><use href="#hand"/></svg></button>
            <i class="sep"></i>
            <button class="tb"><svg class="ico"><use href="#cross"/></svg></button>
            <i class="sep"></i>
            <button class="tb"><svg class="ico"><use href="#ffwd"/></svg></button>
            <button class="tb"><svg class="ico"><use href="#lines"/></svg></button>
            <i class="sep"></i>
            <button class="tb"><svg class="ico"><use href="#to-end"/></svg></button>
            <button class="tb"><svg class="ico"><use href="#cells"/></svg></button>
            <button class="tb"><svg class="ico"><use href="#pts"/></svg></button>
            <i class="sep"></i>
            <button class="tb"><svg class="ico"><use href="#script"/></svg></button>
            <button class="tb"><svg class="ico"><use href="#ring"/></svg></button>
            <i class="sep"></i>
          </div>
          <div class="gc-row">
            <button class="tb"><svg class="ico"><use href="#g1"/></svg></button>
            <button class="tb"><svg class="ico"><use href="#g2"/></svg></button>
            <button class="tb"><svg class="ico"><use href="#g3"/></svg></button>
            <i class="sep"></i>
            <button class="tb"><svg class="ico"><use href="#box3"/></svg></button>
            <button class="tb"><svg class="ico"><use href="#merge"/></svg></button>
            <i class="sep"></i>
            <button class="tb"><svg class="ico"><use href="#unlock"/></svg></button>
          </div>
        </div>

        <div class="pane-buttons">
          <button class="pb q">?</button>
          <button class="pb pin" aria-label="Pane menu"></button>
          <button class="pb x" aria-label="Close pane"></button>
        </div>

        <div class="filter">
          <span class="combo type-combo">
            <select aria-label="Category"><option>Feature types, update methods</option></select>
            <svg class="chev"><use href="#chev"/></svg>
          </span>
          <label class="check"><input type="checkbox">Show settings properties</label>
        </div>

        <div class="grid">
          <div class="gutter"><svg class="ico edit"><use href="#pencil"/></svg></div>
          <div class="tree-area">
            <div class="head root">Feature Type<span class="sort">/</span></div>
            <ul class="tree features">
              <li><button class="exp plus" aria-label="Expand"></button><span>LawCurveFrame</span></li>
              <li><button class="exp plus" aria-label="Expand"></button><span>LawCurveSampleValue</span></li>
              <li><button class="exp" aria-label="Collapse"></button><span>Line</span></li>
              <li class="sub">
                <div class="head">Update Method<span class="sort">/</span></div>
                <ul class="tree methods">
                  <li><button class="exp plus" aria-label="Expand"></button><span>AtPlanarPolygonPolygonIntersection</span></li>
                  <li><button class="exp plus" aria-label="Expand"></button><span>ByChaining</span></li>
                  <li><button class="exp plus" aria-label="Expand"></button><span>ByCrossProduct</span></li>
                  <li><button class="exp plus" aria-label="Expand"></button><span>ByFunction</span></li>
                  <li><button class="exp plus" aria-label="Expand"></button><span>ByImportedData</span></li>
                  <li><button class="exp plus" aria-label="Expand"></button><span>ByLacing</span></li>
                  <li><button class="exp plus" aria-label="Expand"></button><span>ByLacingFromPointGrid</span></li>
                  <li><button class="exp plus" aria-label="Expand"></button><span>ByPointIndicesFromExternalFile</span></li>
                  <li><button class="exp" aria-label="Collapse"></button><span>ByPoints</span></li>
                  <li class="sub props-wrap">
                    <table class="props">
                      <tr><th>Property</th><th>Expression</th></tr>
                      <tr><td>StartPoint: IPoint (repl.)</td><td><input type="text" value="point01" aria-label="StartPoint"></td></tr>
                      <tr class="current">
                        <td>EndPoint: IPoint (repl.)</td>
                        <td><div class="editing"><input type="text" value="point02" aria-label="EndPoint"><button class="fx">f<small>x</small></button><button class="pick" aria-label="Pick"><svg class="ico"><use href="#form"/></svg></button></div></td>
                      </tr>
                    </table>
                  </li>
                  <li class="after"><button class="exp plus" aria-label="Expand"></button><span>ByStartPointDirectionLength</span></li>
                  <li><span class="blank"></span></li>
                </ul>
              </li>
            </ul>
          </div>
          <div class="scrollbar">
            <button class="sb" aria-label="Scroll up"><svg class="chev"><use href="#chev-up"/></svg></button>
            <span class="thumb"></span>
            <button class="sb" aria-label="Scroll down"><svg class="chev"><use href="#chev"/></svg></button>
          </div>
        </div>

        <form class="details">
          <label for="f-type">Type:</label>
          <input id="f-type" type="text" value="Line" readonly>
          <label class="c1" for="f-method">Update method:</label>
          <input id="f-method" type="text" value="ByPoints" readonly>
          <button type="button" class="btn">Example</button>
          <label class="c1" for="f-name">Name of new feature:</label>
          <input id="f-name" type="text" value="line01">
          <label class="check c1"><input type="checkbox">Auto advance</label>
          <label class="check wide"><input type="checkbox">Assign active color, level and symbology</label>
        </form>
        <div class="actions">
          <button class="btn" disabled>Edit Last</button>
          <button class="btn">OK</button>
        </div>
        <div class="tabs">
          <button>TransactionFile</button>
          <button class="active">New Feature</button>
        </div>
      </div>
    </section>

    <section class="window idle tool tasks-nav">
      <header class="title"><h2>Task Navigation</h2><button class="cap close" aria-label="Close"></button></header>
      <div class="tools">
        <button class="tb"><svg class="ico"><use href="#task"/></svg></button><button class="tb narrow"><svg class="arr"><use href="#drop"/></svg></button>
        <i class="sep"></i>
        <button class="tb"><svg class="ico"><use href="#t-line"/></svg></button>
        <button class="tb"><svg class="ico"><use href="#t-rect"/></svg></button>
        <button class="tb"><svg class="ico"><use href="#t-circ"/></svg></button>
        <button class="tb"><svg class="ico"><use href="#t-hatch"/></svg></button>
        <button class="tb"><svg class="ico"><use href="#t-film"/></svg></button>
        <button class="tb"><svg class="ico"><use href="#t-text"/></svg></button>
        <button class="tb"><svg class="ico"><use href="#t-star"/></svg></button>
        <button class="tb"><svg class="ico"><use href="#t-meas"/></svg></button>
        <button class="tb"><svg class="ico"><use href="#t-dim"/></svg></button>
      </div>
    </section>

    <section class="window idle tool main3d">
      <header class="title"><h2>3D Main</h2><button class="cap close" aria-label="Close"></button></header>
      <div class="tools">
        <button class="tb"><svg class="ico"><use href="#m-slab"/></svg></button>
        <button class="tb"><svg class="ico"><use href="#m-ext"/></svg></button>
        <button class="tb"><svg class="ico"><use href="#m-mod"/></svg></button>
        <button class="tb"><svg class="ico"><use href="#m-srf"/></svg></button>
      </div>
    </section>

    <section class="window idle update">
      <header class="title">
        <svg class="ico"><use href="#mu"/></svg>
        <h2>UPDATE 1</h2>
        <button class="cap min" aria-label="Minimize"></button>
        <button class="cap max off" aria-label="Maximize"></button>
        <button class="cap close" aria-label="Close"></button>
      </header>
      <div class="tools"></div>
    </section>
  </main>

  <footer class="taskbar">
    <button class="start"><svg class="ico"><use href="#flag"/></svg>start</button>
    <i class="grip"></i>
    <div class="task-list">
      <button class="task"><svg class="ico"><use href="#sun"/></svg>Adobe Photoshop Ele...</button>
      <button class="task"><svg class="ico"><use href="#dir"/></svg>whshops2008</button>
      <button class="task"><svg class="ico"><use href="#dir"/></svg>workshop6</button>
      <button class="task"><svg class="ico"><use href="#nvu"/></svg>Workshop 6 Notes [fil...</button>
      <button class="task active"><svg class="ico"><use href="#mu"/></svg>[New Transaction File...</button>
    </div>
    <div class="lang">
      <i class="grip"></i>
      <svg class="ico"><use href="#mic"/></svg>
      <svg class="ico"><use href="#ime"/></svg>
      <svg class="ico"><use href="#restore"/></svg>
    </div>
    <div class="tray">
      <button class="tray-arrow" aria-label="Hide icons"></button>
      <svg class="ico"><use href="#net"/></svg>
      <time>8:57 PM</time>
    </div>
  </footer>

</body>
</html>
```
FILE: styles.css
```css
* {
  box-sizing: border-box;
}

body {
  margin: 0;
  height: 100vh;
  display: flex;
  flex-direction: column;
  overflow: hidden;
  font: 11px/14px Roboto, "Liberation Sans", sans-serif;
  color: #000;
}

button, input, select {
  font: inherit;
  color: inherit;
  margin: 0;
  padding: 0;
  border: 0;
  border-radius: 0;
  background: none;
}

h1, h2, p, ul {
  margin: 0;
  padding: 0;
}

.sprite {
  position: absolute;
  width: 0;
  height: 0;
}

.ico {
  width: 16px;
  height: 16px;
  flex: none;
  display: block;
  overflow: visible;
}

symbol {
  overflow: visible;
}

.arr {
  width: 8px;
  height: 8px;
  display: block;
}

.chev {
  width: 10px;
  height: 8px;
  display: block;
}

/* desktop */
.desktop {
  position: relative;
  flex: 1;
  background: linear-gradient(90deg, #9fb4d6 0, #8ba6cc 70px, #4a7fa8 200px, #2c5a78 640px, #0c1420 900px, #05070c 100%);
}

.desk-label {
  position: absolute;
  left: 0;
  top: 951px;
  width: 72px;
  text-align: center;
  line-height: 13px;
  color: #fff;
  text-shadow: 1px 1px 1px #223;
}

.back-win {
  position: absolute;
  background: #ece9d8;
  border: 4px solid #7480dc;
  outline: 1px solid #4a50b8;
  outline-offset: -1px;
}

.back-right {
  left: 1000px;
  right: 10px;
  top: 940px;
  bottom: 18px;
}

.back-editor {
  left: 71px;
  right: 264px;
  top: 940px;
  bottom: 6px;
  padding: 18px 8px 0;
}

/* windows */
.window {
  position: absolute;
  display: flex;
  flex-direction: column;
  background: #0a50e8;
  border-radius: 7px 7px 0 0;
  padding: 0 4px 4px;
  box-shadow: inset -1px -1px #001490, inset 1px 0 #0020b8, inset -2px -2px #0030c8;
}

.title {
  display: flex;
  align-items: center;
  height: 29px;
  flex: none;
  gap: 2px;
  margin: 0 -4px;
  padding: 2px 6px 0;
  border-radius: 7px 7px 0 0;
  background: linear-gradient(#0a4ad0 0, #3d95ff 2px, #0a5cee 5px, #0052e0 12px, #0062fa 22px, #0066ff 26px, #0040c8 100%);
}

.title h1,
.title h2 {
  flex: 1;
  padding-left: 2px;
  font: 600 13px/16px "Open Sans", sans-serif;
  color: #fff;
  white-space: nowrap;
  overflow: hidden;
  text-shadow: 1px 1px #0a1883;
}

.cap {
  position: relative;
  width: 21px;
  height: 21px;
  flex: none;
  border: 1px solid #fff;
  border-radius: 3px;
  background: linear-gradient(135deg, #7aa4f8, #2c62e4 50%, #1c4cd0);
}

.cap.close {
  background: linear-gradient(135deg, #f0a088, #e05030 50%, #c83810);
}

.cap.min::before {
  content: "";
  position: absolute;
  left: 4px;
  bottom: 4px;
  width: 7px;
  height: 3px;
  background: #fff;
}

.cap.max::before {
  content: "";
  position: absolute;
  inset: 4px;
  border: 1px solid #fff;
  border-top-width: 3px;
}

.cap.max.off {
  border-color: #8fb0f0;
  background: #2c66e0;
}

.cap.max.off::before {
  border-color: #7fa2ee;
}

.cap.close::before,
.cap.close::after {
  content: "";
  position: absolute;
  left: 3px;
  right: 3px;
  top: calc(50% - 1px);
  height: 2px;
  background: #fff;
  transform: rotate(45deg);
}

.cap.close::after {
  transform: rotate(-45deg);
}

.window.idle {
  background: #7a86e0;
  box-shadow: inset -1px -1px #5258bc, inset 1px 0 #6a70cc;
}

.idle .title {
  background: linear-gradient(#6a7ad4 0, #9ab4f0 2px, #7c96e4 6px, #7a94e2 16px, #86a4ea 100%);
}

.idle .title h2 {
  color: #d8e4fa;
  text-shadow: none;
}

.idle .cap.close {
  border-color: #c8c8e8;
  background: #b26a80;
}

.idle .cap.max.off {
  border-color: #94a8e4;
  background: #6c88dc;
}

.tool.window {
  border-radius: 0;
}

.tool .title {
  height: 20px;
  padding: 2px 5px 0 2px;
  border-radius: 0;
}

.tool .title h2 {
  font-size: 11px;
  font-weight: bold;
}

.tool .cap {
  width: 13px;
  height: 13px;
  border-radius: 0;
}

.tool .cap::before,
.tool .cap::after {
  left: 1px;
  right: 1px;
}

.tools {
  flex: 1;
  display: flex;
  align-items: center;
  background: #ece9d8;
}

/* toolbars */
.tb {
  width: 20px;
  height: 20px;
  flex: none;
  display: flex;
  align-items: center;
  justify-content: center;
}

.tb.narrow {
  width: 15px;
}

.sep {
  flex: none;
  width: 6px;
  height: 20px;
  background: linear-gradient(90deg, transparent 2px, #b8b5a4 2px, #b8b5a4 3px, #fff 3px, #fff 4px, transparent 4px);
}

.sep.thin {
  width: 3px;
  background: linear-gradient(90deg, transparent 1px, #b8b5a4 1px, #b8b5a4 2px, #fff 2px);
}

.num {
  width: 20px;
  text-align: center;
}

.num.off {
  color: #aaa899;
}

.combo {
  display: flex;
  position: relative;
  background: #fff;
  border: 1px solid #7f9db9;
}

.combo select {
  appearance: none;
  flex: 1;
  min-width: 0;
  padding-left: 2px;
}

.combo .chev {
  position: absolute;
  right: 1px;
  top: 1px;
  bottom: 1px;
  width: 16px;
  height: calc(100% - 2px);
  padding: 3px;
  border-radius: 2px;
  background: linear-gradient(135deg, #e0e8ff, #b4c8f8);
  pointer-events: none;
}

.app {
  left: 0;
  right: 0;
  top: 1px;
  bottom: 37px;
}

.bands {
  display: flex;
  height: 26px;
  flex: none;
  background: #ece9d8;
}

.band {
  display: flex;
  align-items: center;
  padding: 0 0 0 8px;
  border-radius: 3px;
  border-right: 1px solid #b8b5a4;
  background:
    radial-gradient(#a8a594 1px, transparent 1px) 1px 7px / 4px 4px no-repeat,
    radial-gradient(#a8a594 1px, transparent 1px) 1px 11px / 4px 4px no-repeat,
    radial-gradient(#a8a594 1px, transparent 1px) 1px 15px / 4px 4px no-repeat,
    linear-gradient(#fafaf4, #e8e5d6 60%, #c8c5b2);
}

.band + .band {
  padding-right: 4px;
}

.level {
  width: 130px;
  height: 20px;
  margin: 0 3px 0 2px;
}

.level select {
  margin: 1px 18px 1px 1px;
  color: #fff;
  background: #3163c5;
}

.mdi {
  flex: 1;
  background: #808080;
}

.status {
  display: flex;
  height: 26px;
  flex: none;
  gap: 2px;
  border-top: 1px solid #aca899;
  background: #ece9d8;
}

.cell {
  width: 26px;
  flex: none;
  display: flex;
  align-items: center;
  justify-content: center;
  border-left: 1px solid #aca899;
  border-right: 1px solid #fff;
}

.cell.prompt {
  width: 36%;
  border-left: 0;
}

.cell.box {
  margin: 1px 0 2px 4px;
  border: 1px solid #aca899;
  border-color: #aca899 #fff #fff #aca899;
}

.cell.message {
  flex: 1;
  border-left: 0;
}

.cell.level-name {
  width: 113px;
  justify-content: flex-start;
  padding-left: 1px;
}

.cell.wide {
  width: 102px;
}

/* child windows */
.ustn {
  left: 5px;
  top: 64px;
  width: 411px;
  height: 60px;
  padding-left: 2px;
  padding-right: 2px;
}

.ustn .title {
  margin: 0 -2px;
  padding: 2px 5px 0 4px;
}

.menu {
  display: flex;
  align-items: center;
  background: #ece9d8;
}

.menu a {
  color: #000;
  text-decoration: none;
}

.ustn .menu {
  flex: 1;
  padding: 0 10px 4px;
}

.main-tools {
  left: 23px;
  top: 130px;
  width: 187px;
  height: 60px;
}

.behind {
  left: 200px;
  top: 649px;
  width: 207px;
  height: 131px;
}

.behind-bar {
  height: 21px;
  background: #ece9d8;
}

.behind-view {
  flex: 1;
  background: #000;
}

.view {
  left: 436px;
  top: 62px;
  width: 673px;
  height: 712px;
}

.viewbar {
  display: flex;
  align-items: center;
  height: 22px;
  flex: none;
  padding-left: 1px;
  background: #ece9d8;
}

.canvas {
  display: block;
  width: 100%;
  flex: 1;
  min-height: 0;
  overflow: hidden;
  background: #000;
}

.tooltip {
  position: absolute;
  left: 1008px;
  top: 239px;
  padding: 2px 2px 1px 1px;
  border: 1px solid #000;
  background: #ffffe1;
  line-height: 13px;
  white-space: nowrap;
  box-shadow: 3px 3px 3px rgba(0, 0, 0, 0.5);
}

.update {
  left: 641px;
  top: 876px;
  width: 204px;
  height: 51px;
  padding: 0 2px 2px;
}

.update .title {
  margin: 0 -2px;
  padding: 2px 5px 0 4px;
}

.tasks-nav {
  left: 935px;
  top: 834px;
  width: 234px;
  height: 50px;
}

.tasks-nav .tools {
  padding-left: 3px;
}

.main3d {
  left: 1177px;
  top: 831px;
  width: 94px;
  height: 51px;
}

.main3d .tools {
  padding-left: 2px;
}

/* feature window */
.gc {
  left: 3px;
  top: 145px;
  width: 398px;
  height: 632px;
}

.gc > .title {
  padding-left: 3px;
  padding-right: 5px;
}

.gc-body {
  flex: 1;
  display: flex;
  flex-direction: column;
  background: #ece9d8;
}

.gc-menu {
  height: 24px;
  flex: none;
  padding: 4px 14px 0;
  gap: 19px;
}

.gc-tools {
  border-top: 1px solid #c8c5b2;
  border-bottom: 1px solid #c8c5b2;
}

.gc-row {
  display: flex;
  align-items: center;
  height: 23px;
}

.gc-row .tb {
  width: 23px;
}

.cs-combo {
  width: 120px;
  height: 20px;
  margin-left: 1px;
  border: 0;
  align-items: center;
}

.cs-combo .arr {
  width: 11px;
  height: 20px;
  padding: 6px 2px;
  background: #ece9d8;
}

.pane-buttons {
  display: flex;
  justify-content: flex-end;
  gap: 2px;
  padding: 2px 4px 0;
}

.pb {
  position: relative;
  width: 13px;
  height: 13px;
  line-height: 12px;
  color: #fff;
}

.pb.q {
  background: #d4d0c8;
  font-weight: bold;
}

.pb.pin {
  background: #0018c8;
}

.pb.pin::before {
  content: "";
  position: absolute;
  left: 3px;
  top: 3px;
  border: 4px solid transparent;
  border-top: 7px solid #fff;
  border-bottom: 0;
}

.pb.x {
  background: #e81010;
}

.pb.x::before,
.pb.x::after {
  content: "";
  position: absolute;
  left: 1px;
  right: 1px;
  top: 6px;
  height: 2px;
  background: #fff;
  transform: rotate(45deg);
}

.pb.x::after {
  transform: rotate(-45deg);
}

.filter {
  display: flex;
  align-items: center;
  justify-content: space-between;
  padding: 2px 14px 1px 3px;
}

.type-combo {
  width: 217px;
  height: 21px;
}

.check {
  display: flex;
  align-items: center;
  gap: 4px;
}

.check input {
  appearance: none;
  width: 13px;
  height: 13px;
  border: 1px solid #1c5180;
  background: linear-gradient(135deg, #dcdcd7, #fff);
}

.grid {
  display: flex;
  height: 320px;
  flex: none;
  margin: 0 7px 0 3px;
  border: 2px solid #000;
  border-color: #404040 #fff #fff #000;
  border-left-width: 1px;
  overflow: hidden;
  background: #fff;
}

.gutter {
  width: 17px;
  flex: none;
  padding-top: 274px;
  border-right: 1px solid #b8b5a4;
  background:
    linear-gradient(transparent 14px, #c8c5b2 14px, #c8c5b2 15px, #fff 15px) 3px 1px / 10px 16px repeat-y,
    #ece9d8;
}

.tree-area {
  flex: 1;
  min-width: 0;
  overflow: hidden;
}

.tree {
  list-style: none;
  background: linear-gradient(#909090 50%, transparent 50%) 8px 0 / 1px 2px repeat-y;
}

.tree > li {
  display: flex;
  align-items: center;
  gap: 4px;
  height: 16px;
  padding-left: 4px;
}

.tree > li > span {
  height: 16px;
  line-height: 16px;
  padding-left: 3px;
  border: 1px solid #808080;
  border-top: 0;
  background: #f4f4f4;
}

.features > li > span {
  width: 201px;
}

.methods > li > span {
  width: 301px;
}

.tree > li.sub {
  display: block;
  height: auto;
  padding: 7px 0 0 17px;
}

.tree .blank {
  margin-left: 13px;
}

.tree > li.after {
  margin-top: 7px;
}

.tree > li.after > span {
  border-top: 1px solid #808080;
}

.head {
  height: 18px;
  width: 301px;
  display: flex;
  justify-content: space-between;
  align-items: center;
  padding: 0 6px 0 3px;
  border: 1px solid #808080;
  border-bottom: 2px solid #cbc7b8;
  background: #ece9d8;
}

.sub > .head {
  margin-left: 17px;
}

.head.root {
  width: 218px;
  height: 17px;
  padding-left: 21px;
  border-top: 0;
  border-left: 0;
}

.sort {
  color: #404040;
}

.exp {
  position: relative;
  width: 9px;
  height: 9px;
  flex: none;
  border: 1px solid #7898b5;
  background: linear-gradient(135deg, #fff, #d8d4c8);
}

.exp::before,
.exp.plus::after {
  content: "";
  position: absolute;
  left: 1px;
  top: 3px;
  width: 5px;
  height: 1px;
  background: #000;
}

.exp.plus::after {
  left: 3px;
  top: 1px;
  width: 1px;
  height: 5px;
}

.tree > li.props-wrap {
  padding-left: 34px;
  background: linear-gradient(#909090 50%, transparent 50%) 25px 0 / 1px 2px repeat-y;
  background-size: 1px 2px;
}

.props {
  width: 290px;
  table-layout: fixed;
  border-collapse: collapse;
  background: #f4f4f4;
}

.props th {
  height: 17px;
  padding: 0 0 0 3px;
  text-align: left;
  font-weight: normal;
  background: #ece9d8;
  border-bottom: 1px solid #cbc7b8;
}

.props tr:first-child {
  border: 1px solid #808080;
}

.props td {
  height: 16px;
  padding: 0 0 0 3px;
  border: 1px solid #808080;
  line-height: 14px;
}

.props td + td {
  background: #fff;
}

.props .current td:first-child {
  background: #ece9d8;
}

.props input {
  display: block;
  width: 100%;
  height: 14px;
}

.editing {
  display: flex;
}

.editing input {
  flex: 1;
  min-width: 0;
}

.fx {
  width: 17px;
  background: #ccff66;
  font-size: 12px;
  font-weight: bold;
  line-height: 12px;
}

.fx small {
  font-size: 9px;
}

.pick {
  width: 17px;
  background: #66ffff;
}

.pick .ico {
  height: 15px;
}

.scrollbar {
  width: 17px;
  flex: none;
  display: flex;
  flex-direction: column;
  align-items: center;
  background: #f6f5ef;
}

.sb {
  width: 15px;
  height: 17px;
  display: flex;
  align-items: center;
  justify-content: center;
  border-radius: 2px;
  background: linear-gradient(135deg, #dce6ff, #b8ccfa);
}

.sb:last-child {
  margin-top: auto;
}

.thumb {
  width: 15px;
  height: 47px;
  margin-top: 61px;
  border: 1px solid #98b0e8;
  border-radius: 2px;
  background:
    repeating-linear-gradient(#eef4ff 0, #eef4ff 1px, #8cb0f8 1px, #8cb0f8 2px) center / 6px 8px no-repeat,
    linear-gradient(90deg, #c9d8fc, #b9cbf8);
}

.details {
  display: grid;
  grid-template-columns: 105px 215px 55px;
  grid-auto-rows: 20px;
  gap: 4px;
  align-items: center;
  padding: 4px 0 0 2px;
  white-space: nowrap;
}

.details > label.c1 {
  grid-column: 1;
}

.details > input {
  height: 20px;
  padding-left: 2px;
  border: 1px solid #7f9db9;
  background: #fff;
}

.details > input[readonly] {
  border-color: #aca899 #fff #fff #aca899;
  background: #ece9d8;
}

.details > .check {
  align-self: start;
}

.details > .check.c1 {
  padding-left: 10px;
}

.details > .check.wide {
  grid-column: 2 / 4;
}

.btn {
  height: 22px;
  border: 1px solid #003c74;
  border-radius: 3px;
  background: linear-gradient(#fff, #f4f3ee 80%, #dcd8cc);
}

.btn:disabled {
  color: #aca899;
  border-color: #c9c7ba;
  background: #f5f4ea;
}

.actions {
  display: flex;
  justify-content: space-between;
  padding: 1px 5px 4px 3px;
}

.actions .btn {
  width: 78px;
}

.tabs {
  display: flex;
  flex: 1;
  border-bottom: 2px solid #ece9d8;
  background: #404040;
}

.tabs button {
  padding: 0 8px 0 9px;
  color: #fff;
}

.tabs .active {
  padding: 0 6px 0 5px;
  color: #000;
  background: #ece9d8;
}

/* taskbar */
.taskbar {
  display: flex;
  align-items: stretch;
  height: 33px;
  flex: none;
  padding-top: 3px;
  color: #fff;
  background: linear-gradient(#1c52c4 0, #3c8cf0 3px, #2c6ae8 6px, #245edc 12px, #245edc 28px, #1c48b0 100%);
}

.start {
  width: 98px;
  display: flex;
  align-items: center;
  gap: 6px;
  padding-left: 11px;
  border-radius: 0 8px 10px 0;
  font: italic bold 17px/20px "Open Sans", sans-serif;
  text-shadow: 1px 1px 2px #103010;
  background: linear-gradient(#2c7a2c 0, #52b452 3px, #3c983c 10px, #38943a 22px, #2a702a 100%);
  box-shadow: inset -3px 0 4px #1c5c1c;
}

.grip {
  width: 5px;
  margin: 6px 8px 6px 6px;
  background: radial-gradient(#10389c 1px, transparent 1px) 0 0 / 4px 5px;
}

.task-list {
  flex: 1;
  display: flex;
  gap: 3px;
  padding: 2px 0 3px;
}

.task {
  width: 157px;
  display: flex;
  align-items: center;
  gap: 4px;
  padding-left: 9px;
  border-radius: 3px;
  text-align: left;
  white-space: nowrap;
  background: linear-gradient(#5c9cfc, #3c80f4 4px, #3a7cf0 80%, #2c68dc);
}

.task.active {
  background: #1e4ab0;
  box-shadow: inset 1px 1px 2px #0c2c80;
}

.lang {
  display: flex;
  align-items: center;
  gap: 4px;
  padding-right: 13px;
}

.lang .grip {
  align-self: stretch;
  margin-right: 4px;
}

.tray {
  display: flex;
  align-items: center;
  gap: 2px;
  padding-right: 17px;
  border-left: 1px solid #0c3c90;
  background: linear-gradient(#0c70d0 0, #20b4f4 3px, #1492ec 8px, #1290e8 26px, #0c70c0 100%);
}

.tray time {
  padding-left: 8px;
}

.tray-arrow {
  position: relative;
  width: 16px;
  height: 16px;
  margin-left: -8px;
  border-radius: 50%;
  border: 1px solid #a0d8ff;
  background: radial-gradient(#48a8f8, #0c58c8);
}

.tray-arrow::before {
  content: "";
  position: absolute;
  left: 5px;
  top: 4px;
  width: 5px;
  height: 5px;
  border: solid #fff;
  border-width: 0 0 2px 2px;
  transform: rotate(45deg);
}
```
